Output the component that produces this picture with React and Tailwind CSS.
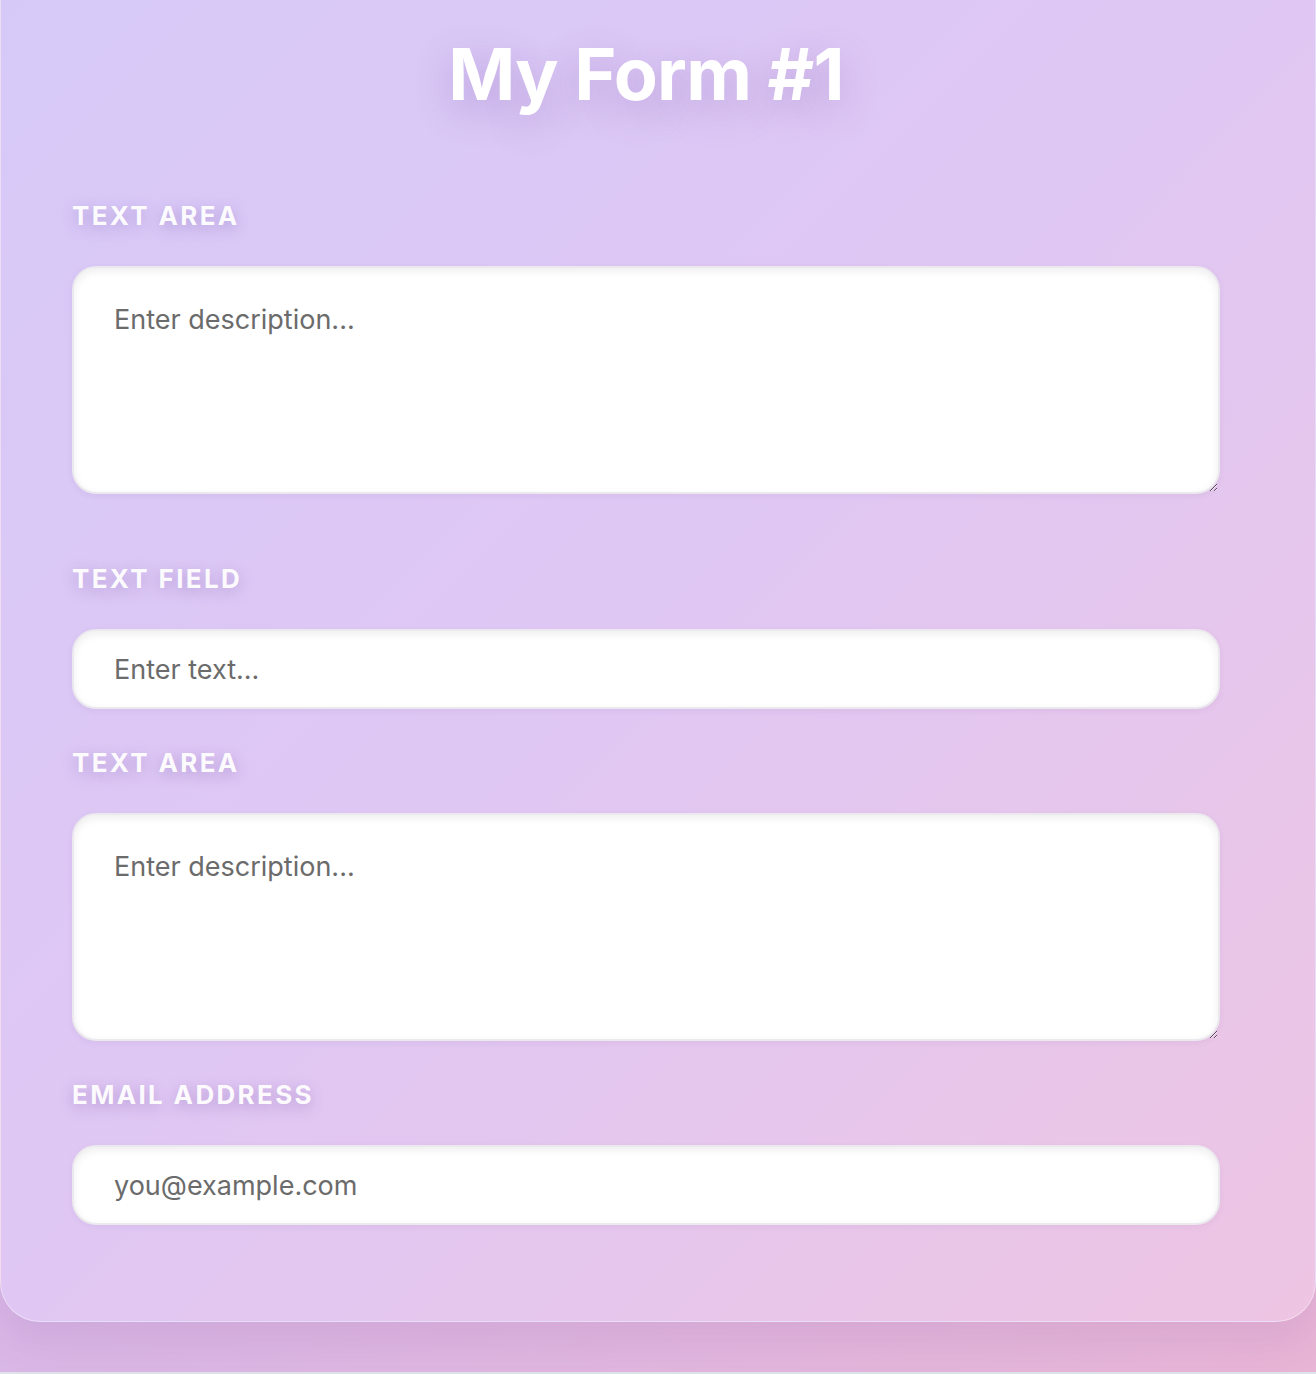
import React from "react";

const font = { fontFamily: "Inter, 'Noto Sans', sans-serif" };

const Label = ({ children, className = "" }) => (
  <label
    className={`block text-[26px] font-bold uppercase leading-[32px] tracking-[0.09em] text-white/95 [text-shadow:0_4px_14px_rgba(110,70,160,0.35)] ${className}`}
  >
    {children}
  </label>
);

const boxClass =
  "block w-full rounded-[24px] border-2 border-[#ebe8ee] bg-white px-[40px] text-[27px] text-[#333] outline-none placeholder:text-[#6b6b6b] shadow-[inset_0_3px_8px_rgba(0,0,0,0.07),0_2px_6px_rgba(120,80,160,0.08)]";

export default function App() {
  return (
    <div className="min-h-screen bg-[#dde3e8]" style={font}>
      <div className="bg-gradient-to-br from-[#cbb9f1] via-[#d9b7e6] to-[#e8b5d6] pb-[50px]">
        <div className="rounded-b-[40px] border border-t-0 border-white/40 bg-gradient-to-br from-[#d6c9f8] via-[#e0c7f3] to-[#eec5e3] pb-[96px] pl-[71px] pr-[95px] pt-[38px] shadow-[0_20px_40px_rgba(130,70,150,0.12)]">
          <h1 className="text-center text-[72px] font-bold leading-none tracking-[-0.01em] text-white [text-shadow:0_12px_36px_rgba(120,80,170,0.3)]">
            My Form #1
          </h1>

          <Label className="mt-[90px]">Text Area</Label>
          <textarea
            rows={4}
            placeholder="Enter description..."
            className={`${boxClass} mt-[34px] h-[228px] resize-y pt-[32px] leading-[40px]`}
          />

          <Label className="mt-[69px]">Text Field</Label>
          <input
            type="text"
            placeholder="Enter text..."
            className={`${boxClass} mt-[34px] h-[80px]`}
          />

          <Label className="mt-[38px]">Text Area</Label>
          <textarea
            rows={4}
            placeholder="Enter description..."
            className={`${boxClass} mt-[34px] h-[228px] resize-y pt-[32px] leading-[40px]`}
          />

          <Label className="mt-[38px]">Email Address</Label>
          <input
            type="email"
            placeholder="you@example.com"
            className={`${boxClass} mt-[34px] h-[80px]`}
          />
        </div>
      </div>
    </div>
  );
}
